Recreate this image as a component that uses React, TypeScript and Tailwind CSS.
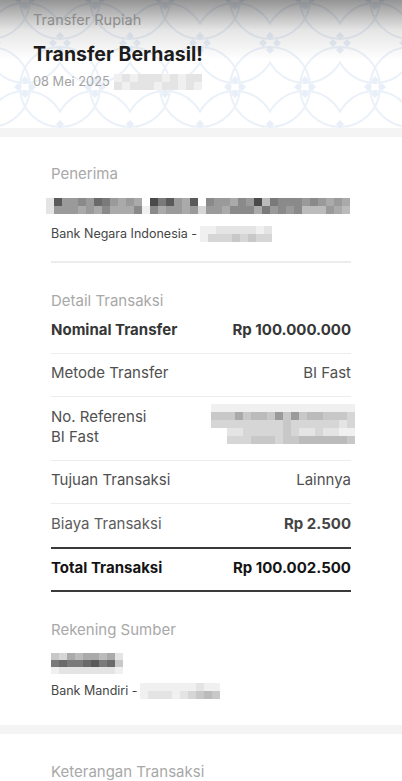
const shade: Record<string, string> = {
  '4': 'bg-[#4a4a4a]',
  '5': 'bg-[#5a5a5a]',
  '6': 'bg-[#6a6a6a]',
  '7': 'bg-[#7a7a7a]',
  '8': 'bg-[#8a8a8a]',
  '9': 'bg-[#9a9a9a]',
  a: 'bg-[#aaaaaa]',
  b: 'bg-[#bbbbbb]',
  c: 'bg-[#c8c8c8]',
  d: 'bg-[#d6d6d6]',
  e: 'bg-[#e4e4e4]',
  f: 'bg-[#f0f0f0]',
  '.': 'bg-transparent',
};

// censored (pixelated) text blocks
function Pix({ rows, cell = 'w-[8px]', row = 'h-[8px]' }: { rows: string[]; cell?: string; row?: string }) {
  return (
    <div className="flex flex-col">
      {rows.map((r, i) => (
        <div key={i} className={`flex ${row}`}>
          {r.split('').map((c, j) => (
            <div key={j} className={`${cell} h-full ${shade[c]}`} />
          ))}
        </div>
      ))}
    </div>
  );
}

function Pattern() {
  return (
    <svg className="absolute inset-0 w-full h-full" aria-hidden>
      <defs>
        <pattern id="kawung" x="60" y="43" width="70" height="88" patternUnits="userSpaceOnUse">
          <g fill="none" stroke="#ebf1f8" strokeWidth="2">
            <circle cx="35" cy="0" r="40" />
            <circle cx="0" cy="44" r="40" />
            <circle cx="70" cy="44" r="40" />
            <circle cx="35" cy="88" r="40" />
          </g>
          <g fill="#e8eff8">
            {[
              [0, 0],
              [70, 0],
              [35, 44],
              [0, 88],
              [70, 88],
            ].map(([x, y], i) => (
              <g key={i} transform={`translate(${x} ${y})`}>
                <path d="M0 -11 L4 -7 L0 -3 L-4 -7 Z" />
                <path d="M0 11 L4 7 L0 3 L-4 7 Z" />
                <path d="M-11 0 L-7 -4 L-3 0 L-7 4 Z" />
                <path d="M11 0 L7 -4 L3 0 L7 4 Z" />
              </g>
            ))}
          </g>
        </pattern>
      </defs>
      <rect width="100%" height="100%" fill="url(#kawung)" />
    </svg>
  );
}

function Row({ label, value, strong = false, last = false }: { label: React.ReactNode; value: React.ReactNode; strong?: boolean; last?: boolean }) {
  return (
    <div className={`flex justify-between items-start pt-[9px] pb-[13px] ${last ? '' : 'border-b border-[#ededed]'}`}>
      <div className={`text-[15px] leading-[20px] ${strong ? 'font-bold text-[#363636]' : 'text-[#505050]'}`}>{label}</div>
      <div className={`text-[15px] leading-[20px] ${strong ? 'font-bold text-[#363636]' : 'text-[#505050]'}`}>{value}</div>
    </div>
  );
}

export default function App() {
  return (
    <div className="w-[402px] h-[781px] overflow-hidden bg-[#f4f4f4] font-['Inter',sans-serif]">
      {/* header */}
      <div className="relative h-[128px] bg-white overflow-hidden">
        <Pattern />
        <div className="absolute inset-x-0 top-0 h-[60px] bg-gradient-to-b from-[rgba(0,0,0,0.42)] via-[rgba(0,0,0,0.1)] to-transparent" />
        <div className="relative px-[33px] pt-[10px]">
          <div className="text-[14.5px] leading-[20px] text-[#8c8c8c]">Transfer Rupiah</div>
          <div className="mt-[10px] text-[19.5px] leading-[28px] font-bold text-[#1c1c1c]">Transfer Berhasil!</div>
          <div className="mt-[5px] flex items-center gap-[4px]">
            <span className="text-[12.8px] leading-[18px] text-[#a3a3a3]">08 Mei 2025</span>
            <Pix rows={['fefeeefefee', 'efeeefeefef']} />
          </div>
        </div>
      </div>

      {/* detail card */}
      <div className="mt-[9px] bg-white px-[51px] pt-[27px] pb-[25px]">
        <div className="text-[15px] leading-[20px] text-[#a8a8a8]">Penerima</div>
        <div className="mt-[14px] -ml-[5px]">
          <Pix rows={['e59989679a9a.4759a5.899a894b7888989a9a', 'e999a9a8aaa8f8a99a9d99a888a79898bbb9ab']} />
        </div>
        <div className="mt-[11px] flex items-center">
          <span className="text-[12.5px] leading-[18px] text-[#454545]">Bank Negara Indonesia -</span>
          <span className="ml-[3px]"><Pix rows={['ffeeeeefe', 'fdddcdcdd']} /></span>
        </div>
        <div className="mt-[18px] h-[1.5px] bg-[#ececec]" />

        <div className="mt-[28px] text-[15px] leading-[20px] text-[#a8a8a8]">Detail Transaksi</div>
        <div>
          <Row strong label="Nominal Transfer" value="Rp 100.000.000" />
          <Row label="Metode Transfer" value="BI Fast" />
          <div className="flex justify-between items-start pt-[10px] pb-[13px] border-b border-[#ededed]">
            <div className="text-[15px] leading-[20px] text-[#505050]">
              No. Referensi
              <br />
              BI Fast
            </div>
            <div className="-mr-[4px] -mt-[3px]">
              <Pix
                rows={[
                  'ffffffffffffffffff',
                  'cccacbbc9c9cbbcccd',
                  'dddddddddcdddddded',
                  '..eedddddcdeedeeff',
                  '..dddcccdccbbbbbbc',
                ]}
              />
            </div>
          </div>
          <Row label="Tujuan Transaksi" value="Lainnya" />
          <div className="flex justify-between items-start pt-[10px] pb-[13px]">
            <div className="text-[15px] leading-[20px] text-[#5c5c5c]">Biaya Transaksi</div>
            <div className="text-[15px] leading-[20px] font-bold text-[#444]">Rp 2.500</div>
          </div>
          <div className="h-[2px] bg-[#3a3a3a]" />
          <div className="flex justify-between items-start pt-[9px] pb-[12px]">
            <div className="text-[15px] leading-[20px] font-bold text-[#141414]">Total Transaksi</div>
            <div className="text-[15px] leading-[20px] font-bold text-[#141414]">Rp 100.002.500</div>
          </div>
          <div className="h-[2px] bg-[#3a3a3a]" />
        </div>

        <div className="mt-[28px] text-[15px] leading-[20px] text-[#a8a8a8]">Rekening Sumber</div>
        <div className="mt-[13px]">
          <Pix row="h-[7px]" rows={['cdabaabae', '76776576c', 'feeeeeeef']} />
        </div>
        <div className="mt-[8px] flex items-center">
          <span className="text-[12.5px] leading-[18px] text-[#454545]">Bank Mandiri -</span>
          <span className="ml-[2px]"><Pix rows={['fffffffeff', 'feeefedcbc']} /></span>
        </div>
      </div>

      {/* keterangan */}
      <div className="mt-[9px] bg-white px-[51px] pt-[28px] pb-[20px]">
        <div className="text-[15px] leading-[20px] text-[#a8a8a8]">Keterangan Transaksi</div>
      </div>
    </div>
  );
}
